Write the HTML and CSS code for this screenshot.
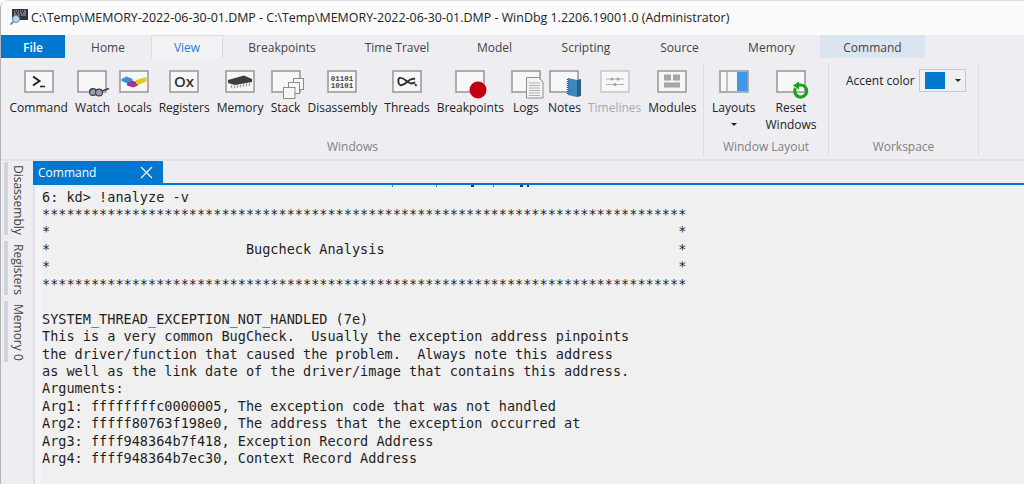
FILE: index.html
```html
<!DOCTYPE html>
<html lang="en">
<head>
<meta charset="utf-8">
<title>WinDbg</title>
<link rel="stylesheet" href="styles.css">
</head>
<body>
<div class="window">
  <header class="titlebar">
    <svg class="appicon" width="18" height="16" viewBox="0 0 18 16"><rect x="2" y="0" width="16" height="11" fill="#30343e"/><path d="M4 2h1M6 2h1M8 2h1M10 2h1M12 2h1M14 2h2M4 4h2M7 4h2M10 4h2M13 4h3M4 6h3M8 6h2M11 6h5" stroke="#aab0ba"/><circle cx="6" cy="10" r="3.500" fill="#bcd6ec" stroke="#6a8ba8"/><path d="M3.500 12.500L0.500 15.500" stroke="#66788a" stroke-width="1.700"/></svg>
    <span>C:\Temp\MEMORY-2022-06-30-01.DMP - C:\Temp\MEMORY-2022-06-30-01.DMP - WinDbg 1.2206.19001.0 (Administrator)</span>
  </header>

  <nav class="tabs">
    <span class="tab file">File</span>
    <span class="tab t-home">Home</span>
    <span class="tab view">View</span>
    <span class="tab t-bp">Breakpoints</span>
    <span class="tab t-tt">Time Travel</span>
    <span class="tab t-model">Model</span>
    <span class="tab t-script">Scripting</span>
    <span class="tab t-src">Source</span>
    <span class="tab t-mem">Memory</span>
    <span class="tab command">Command</span>
  </nav>

  <section class="ribbon">
    <div class="group g-windows">
      <div class="items">
        <div class="item">
          <svg viewBox="0 0 30 23"><rect class="fr" x="1" y="1" width="28" height="21"/><path d="M9 6.500l6.500 4.500-6.500 4.500" fill="none" stroke="#222" stroke-width="2"/><path d="M16 16.500h5" stroke="#222" stroke-width="1.500"/></svg>
          <span>Command</span>
        </div>
        <div class="item">
          <svg viewBox="0 0 30 23"><rect class="fr" x="1" y="1" width="28" height="21"/><circle cx="16" cy="22" r="3.400" fill="#8fa3b5" stroke="#3a3a3a" stroke-width="1.100"/><circle cx="22" cy="22.500" r="3.400" fill="#8fa3b5" stroke="#3a3a3a" stroke-width="1.100"/><path d="M25 21l7-2.500" stroke="#3a3a3a" stroke-width="1.500"/><path d="M12 21l3-1.500" stroke="#3a3a3a"/></svg>
          <span>Watch</span>
        </div>
        <div class="item">
          <svg viewBox="0 0 30 23"><rect class="fr" x="1" y="1" width="28" height="21"/><path d="M2.500 9l5-2.500 6 2.500v2.500l-5 2-6-2.500z" fill="#2f95dc"/><path d="M8 13l5-2.500 6 2v3l-5 2-6-2z" fill="#a5348f"/><path d="M17 10l10.500-3v4.500l-8 3.500-2.500-1.500z" fill="#e6c820"/></svg>
          <span>Locals</span>
        </div>
        <div class="item">
          <svg viewBox="0 0 30 23"><rect class="fr" x="1" y="1" width="28" height="21"/><text x="15" y="17" class="ox">Ox</text></svg>
          <span>Registers</span>
        </div>
        <div class="item">
          <svg viewBox="0 0 30 23"><rect class="fr" x="1" y="1" width="28" height="21"/><path d="M3 10l16-4.500 8 3.500v3L10 15l-7-2z" fill="#3c3c3c"/><path d="M7 15l-1 3M10 15.500l-1 3M13 15l-1 3M16 14.500l-1 3M19 14l-1 3M22 13.500l-1 3M25 13l-1 3" stroke="#8a8a8a"/></svg>
          <span>Memory</span>
        </div>
        <div class="item">
          <svg viewBox="0 0 30 23"><rect class="fr" x="1" y="1" width="28" height="21"/><rect class="sq" x="22.500" y="8.500" width="10" height="11"/><rect class="sq" x="17.500" y="12.500" width="11" height="11"/><rect class="sq" x="12.500" y="17.500" width="11.500" height="11"/></svg>
          <span>Stack</span>
        </div>
        <div class="item">
          <svg viewBox="0 0 30 23"><rect class="fr" x="1" y="1" width="28" height="21"/><text x="15" y="10.500" class="bin">01101</text><text x="15" y="18" class="bin">10101</text></svg>
          <span>Disassembly</span>
        </div>
        <div class="item">
          <svg viewBox="0 0 30 23"><rect class="fr" x="1" y="1" width="28" height="21"/><path d="M7 8c4-1 6 2 9 4s5 2 7 0M8 15c-2-1-2-5-1-7M8 15c3 1 5-1 7-3s5-4 8-3" fill="none" stroke="#333" stroke-width="1.900"/><path d="M23 14l1.500 2" stroke="#333" stroke-width="1.800"/></svg>
          <span>Threads</span>
        </div>
        <div class="item">
          <svg viewBox="0 0 30 23"><rect class="fr" x="1" y="1" width="28" height="21"/><circle cx="23" cy="20" r="8.500" fill="#c00010"/></svg>
          <span>Breakpoints</span>
        </div>
        <div class="item">
          <svg viewBox="0 0 30 23"><rect class="fr" x="1" y="1" width="28" height="21"/><path d="M15.500 7.500h12l4.500 4.500v16H15.500z" fill="#f4f4f4" stroke="#8c8c8c"/><path d="M18 13h11M18 15.500h11M18 18h11M18 20.500h11M18 23h11M18 25.500h11" stroke="#b0b0b0"/></svg>
          <span>Logs</span>
        </div>
        <div class="item">
          <svg viewBox="0 0 30 23"><rect class="fr" x="1" y="1" width="28" height="21"/><path d="M19 8l9 2v17l-9-2z" fill="#3f86bb"/><path d="M28 10l4-1v17l-4 1z" fill="#2b5f88"/><path d="M18.500 9v16" stroke="#1f4a6b" stroke-width="1.500" stroke-dasharray="1 1"/></svg>
          <span>Notes</span>
        </div>
        <div class="item off">
          <svg viewBox="0 0 30 23"><rect class="fr" x="1" y="1" width="28" height="21"/><path d="M6 9h18M6 14.500h18" stroke="#b4b4b4"/><circle cx="12" cy="9" r="1.500" fill="#a0a0a0"/><circle cx="18" cy="9" r="1.500" fill="#a0a0a0"/><circle cx="15" cy="14.500" r="1.500" fill="#a0a0a0"/></svg>
          <span>Timelines</span>
        </div>
        <div class="item">
          <svg viewBox="0 0 30 23"><rect class="fr" x="1" y="1" width="28" height="21"/><path d="M7 4.500h7v6H7zM16 4.500h7v6h-7zM7 12.500h16v5H7z" fill="#a6a6a6"/></svg>
          <span>Modules</span>
        </div>
      </div>
      <div class="caption">Windows</div>
    </div>
    <div class="group g-layout">
      <div class="items items-layout">
        <div class="item">
          <svg viewBox="0 0 30 23"><rect class="fr" x="1" y="1" width="28" height="21"/><rect x="18" y="2" width="10.500" height="19" fill="#3f97e6"/><path d="M8 2v19" stroke="#c0c0c0" stroke-width="2"/></svg>
          <span>Layouts</span>
          <i class="caret"></i>
        </div>
        <div class="item reset">
          <svg viewBox="0 0 30 23"><rect class="fr" x="1" y="1" width="28" height="21"/><path d="M19.500 18a6 6 0 1 0 5-3h-3" fill="none" stroke="#1ea01e" stroke-width="3.200"/><path d="M23 11.500v8l-6-4z" fill="#1ea01e"/></svg>
          <span>Reset<br>Windows</span>
        </div>
      </div>
      <div class="caption">Window Layout</div>
    </div>
    <div class="group g-workspace">
      <div class="accent">
        <span>Accent color</span>
        <div class="picker"><b class="swatch"></b><i class="caret"></i></div>
      </div>
      <div class="caption">Workspace</div>
    </div>
  </section>

  <main class="lower">
    <aside class="rail">
      <div class="rail-item r-dis"><span>Disassembly</span></div>
      <div class="rail-item r-reg"><span>Registers</span></div>
      <div class="rail-item r-mem"><span>Memory 0</span></div>
    </aside>
    <div class="pane">
      <div class="panehead"><div class="panetab"><span>Command</span><svg width="13" height="13" viewBox="0 0 13 13"><path d="M1 1l11 11M12 1L1 12" stroke="#fff" stroke-width="1.200"/></svg></div></div>
      <svg class="ticks" width="991" height="2" viewBox="0 0 991 2"><path d="M359.500 0v2M403.500 0v2M460.500 0v2" stroke="#5a7890"/><path d="M438 0h3v2h-3zM487 0h3v2h-3zM494 0h2v2h-2z" fill="#333"/></svg>
      <div class="paper">
        <div class="gutter"></div>
        <pre class="output">6: kd&gt; !analyze -v
*******************************************************************************
*                                                                             *
*                        Bugcheck Analysis                                    *
*                                                                             *
*******************************************************************************

SYSTEM_THREAD_EXCEPTION_NOT_HANDLED (7e)
This is a very common BugCheck.  Usually the exception address pinpoints
the driver/function that caused the problem.  Always note this address
as well as the link date of the driver/image that contains this address.
Arguments:
Arg1: ffffffffc0000005, The exception code that was not handled
Arg2: fffff80763f198e0, The address that the exception occurred at
Arg3: ffff948364b7f418, Exception Record Address
Arg4: ffff948364b7ec30, Context Record Address</pre>
      </div>
    </div>
  </main>
</div>
</body>
</html>
```

FILE: styles.css
```css
* { box-sizing: border-box; }
html, body { margin: 0; height: 100%; }
body { background: #fff; font-family: "Open Sans", "Liberation Sans", sans-serif; overflow: hidden; }
.window { width: 1024px; height: 484px; display: flex; flex-direction: column; background: #eeeef2; border-left: 1px solid #b4b4b8; border-top-left-radius: 8px; overflow: hidden; }

.titlebar { height: 35px; flex: none; padding: 0 0 2px 9px; background: #fafafa; border-top: 1px solid #dcdcdc; display: flex; align-items: center; gap: 3px; font-size: 12.450px; color: #222; white-space: nowrap; }
.appicon { flex: none; }

.tabs { height: 23px; display: flex; font-size: 12px; color: #444; flex: none; }
.tab { display: flex; align-items: center; justify-content: center; height: 23px; flex: none; padding-top: 1px; }
.file { width: 64px; background: #0078d0; color: #fff; font-weight: 600; }
.t-home { width: 86px; }
.view { width: 72px; color: #2f7fc8; border: 1px solid #dcdce0; border-bottom: 0; background: #f2f2f5; }
.t-bp { width: 118px; }
.t-tt { width: 112px; }
.t-model { width: 83px; }
.t-script { width: 100px; }
.t-src { width: 87px; }
.t-mem { width: 97px; }
.command { width: 105px; background: #dae5ef; }

.ribbon { height: 103px; display: flex; padding-left: 1px; border-bottom: 2px solid #e2e2e6; flex: none; }
.group { display: flex; flex-direction: column; flex: none; border-right: 1px solid #dcdce0; margin-top: 5px; height: 92px; }
.g-windows { width: 702px; }
.g-layout { width: 125px; }
.g-workspace { width: 150px; }
.items { display: flex; flex: 1; gap: 7px; padding: 7px 0 0 7.500px; }
.items-layout { gap: 10px; padding-left: 8px; }
.caption { font-size: 12px; color: #808080; text-align: center; height: 18px; line-height: 20px; }

.item { display: flex; flex-direction: column; align-items: center; font-size: 12px; color: #222; white-space: nowrap; line-height: 17px; }
.item svg { display: block; width: 30px; height: 23px; overflow: visible; flex: none; }
.item span { margin-top: 6px; }
.reset { text-align: center; }
.fr { fill: #f7f7f7; stroke: #9c9c9c; stroke-width: 1.600; }
.sq { fill: #f7f7f7; stroke: #8c8c8c; }
.ox { font: 600 15px "Open Sans", sans-serif; fill: #333; text-anchor: middle; }
.bin { font: 700 7.500px "Liberation Mono", monospace; fill: #444; text-anchor: middle; }
.off { color: #a8a8a8; }
.off .fr { stroke: #c8c8c8; }

.caret { display: block; width: 0; height: 0; border: 3px solid transparent; border-top: 3px solid #222; border-bottom: 0; }
.item .caret { margin-top: 7px; }

.accent { flex: 1; display: flex; align-items: flex-start; gap: 4px; padding: 6px 0 0 17px; font-size: 12px; color: #222; }
.accent span { line-height: 17px; margin-top: 2.500px; }
.picker { width: 47px; height: 23px; border: 1px solid #c8c8c8; display: flex; align-items: center; padding-left: 5px; gap: 10px; background: #f0f0f2; }
.swatch { width: 20px; height: 17px; background: #0078d0; }

.lower { flex: 1; display: flex; min-height: 0; }
.rail { width: 32px; padding: 1px 0 0 3px; display: flex; flex-direction: column; gap: 6px; flex: none; }
.rail-item { border-left: 4px solid #d2d2da; width: 24px; padding: 3px 0 0 3px; font-size: 12px; color: #444; }
.rail-item span { writing-mode: vertical-rl; display: block; white-space: nowrap; line-height: 15px; }
.r-dis { height: 73px; }
.r-reg { height: 54px; }
.r-mem { height: 61px; }

.pane { flex: 1; min-width: 0; display: flex; flex-direction: column; }
.panehead { height: 24px; border-bottom: 2px solid #0078d0; flex: none; }
.panetab { width: 130px; height: 22px; background: #0078d0; color: #fff; font-size: 12px; display: flex; align-items: center; justify-content: space-between; padding: 0 10px 0 5px; }
.ticks { display: block; flex: none; background: #e6f0fa; }
.paper { flex: 1; min-height: 0; display: flex; }
.gutter { width: 9px; flex: none; border-left: 2px solid #dfdfe8; background: #f5f5f8; }
.output { flex: 1; margin: 0; padding: 1.600px 0 0; background: #f0f0f0; font-family: "DejaVu Sans Mono", "Liberation Mono", monospace; font-size: 13.550px; line-height: 17.430px; color: #1f1f1f; overflow: hidden; }
```
